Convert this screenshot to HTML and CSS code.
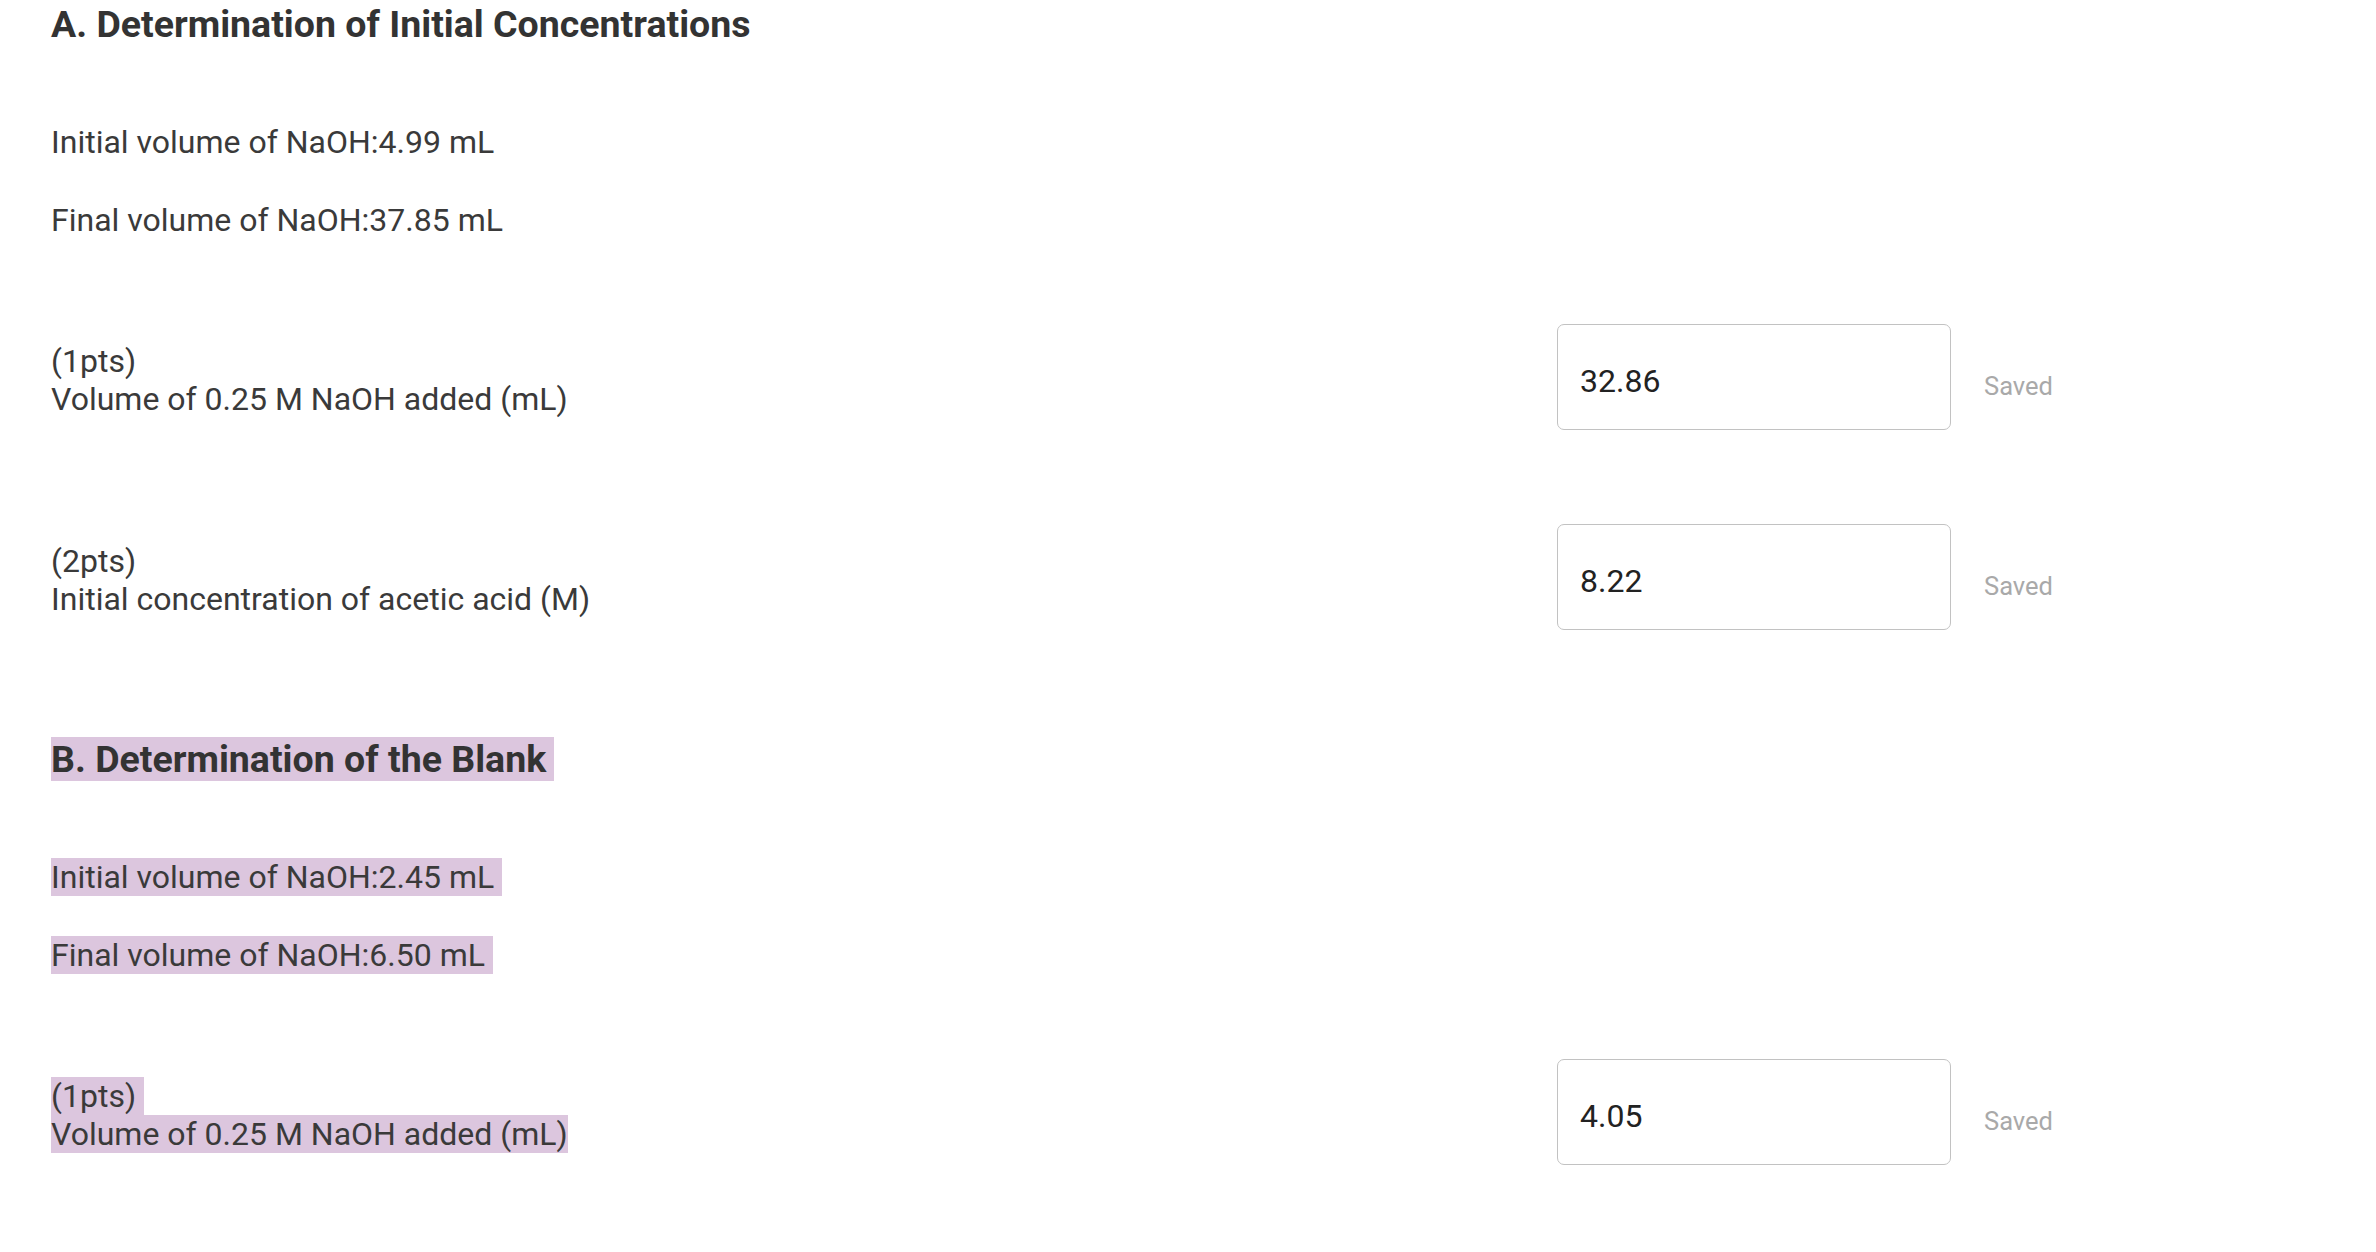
FILE: index.html
```html
<!DOCTYPE html>
<html>
<head>
<meta charset="utf-8">
<link rel="stylesheet" href="styles.css">
</head>
<body>
<div class="page">
  <section class="section">
    <h2 class="heading">A. Determination of Initial Concentrations</h2>
    <p class="info">Initial volume of NaOH:4.99 mL</p>
    <p class="info">Final volume of NaOH:37.85 mL</p>
    <div class="row">
      <div class="label"><span>(1pts)</span><br><span>Volume of 0.25 M NaOH added (mL)</span></div>
      <div class="field"><input class="answer" type="text" value="32.86"></div>
      <div class="status">Saved</div>
    </div>
    <div class="row">
      <div class="label"><span>(2pts)</span><br><span>Initial concentration of acetic acid (M)</span></div>
      <div class="field"><input class="answer" type="text" value="8.22"></div>
      <div class="status">Saved</div>
    </div>
  </section>
  <section class="section section-b">
    <h2 class="heading"><span class="sel sel-pad">B. Determination of the Blank</span></h2>
    <p class="info"><span class="sel sel-pad">Initial volume of NaOH:2.45 mL</span></p>
    <p class="info"><span class="sel sel-pad">Final volume of NaOH:6.50 mL</span></p>
    <div class="row">
      <div class="label"><span class="sel sel-pad">(1pts)</span><br><span class="sel">Volume of 0.25 M NaOH added (mL)</span></div>
      <div class="field"><input class="answer" type="text" value="4.05"></div>
      <div class="status">Saved</div>
    </div>
  </section>
</div>
</body>
</html>
```

FILE: styles.css
```css
html, body {
  margin: 0;
  padding: 0;
  background: #ffffff;
}

body {
  font-family: Roboto, "Liberation Sans", Arial, sans-serif;
  color: #3a3a3a;
}

.page {
  padding: 3px 0 0 51px;
  display: flex;
  flex-direction: column;
}

.section {
  display: flex;
  flex-direction: column;
}

.section-b {
  margin-top: 108px;
}

.heading {
  margin: 0;
  font-size: 37.5px;
  font-weight: 700;
  line-height: 42px;
  color: #333333;
}

.info {
  margin: 0;
  font-size: 32px;
  line-height: 38px;
  color: #3a3a3a;
}

.heading + .info {
  margin-top: 78px;
}

.info + .info {
  margin-top: 40px;
}

.info + .row {
  margin-top: 85px;
}

.row + .row {
  margin-top: 94px;
}

.row {
  display: grid;
  grid-template-columns: 1476px 394px auto;
  column-gap: 30px;
  align-items: center;
}

.label {
  font-size: 32px;
  line-height: 38px;
  color: #3a3a3a;
  padding-top: 6px;
}

.field {
  display: flex;
}

.answer {
  box-sizing: border-box;
  width: 394px;
  height: 106px;
  border: 1.5px solid #c2c2c2;
  border-radius: 7px;
  padding: 8px 0 0 22px;
  font-family: Roboto, "Liberation Sans", Arial, sans-serif;
  font-size: 32px;
  color: #222222;
  background: #ffffff;
  outline: none;
}

.status {
  font-size: 25.5px;
  color: #a9a9a9;
  margin-top: 18px;
  margin-left: 3px;
}

.sel {
  background: #dcc6de;
}

.sel-pad {
  padding-right: 8px;
}
```
